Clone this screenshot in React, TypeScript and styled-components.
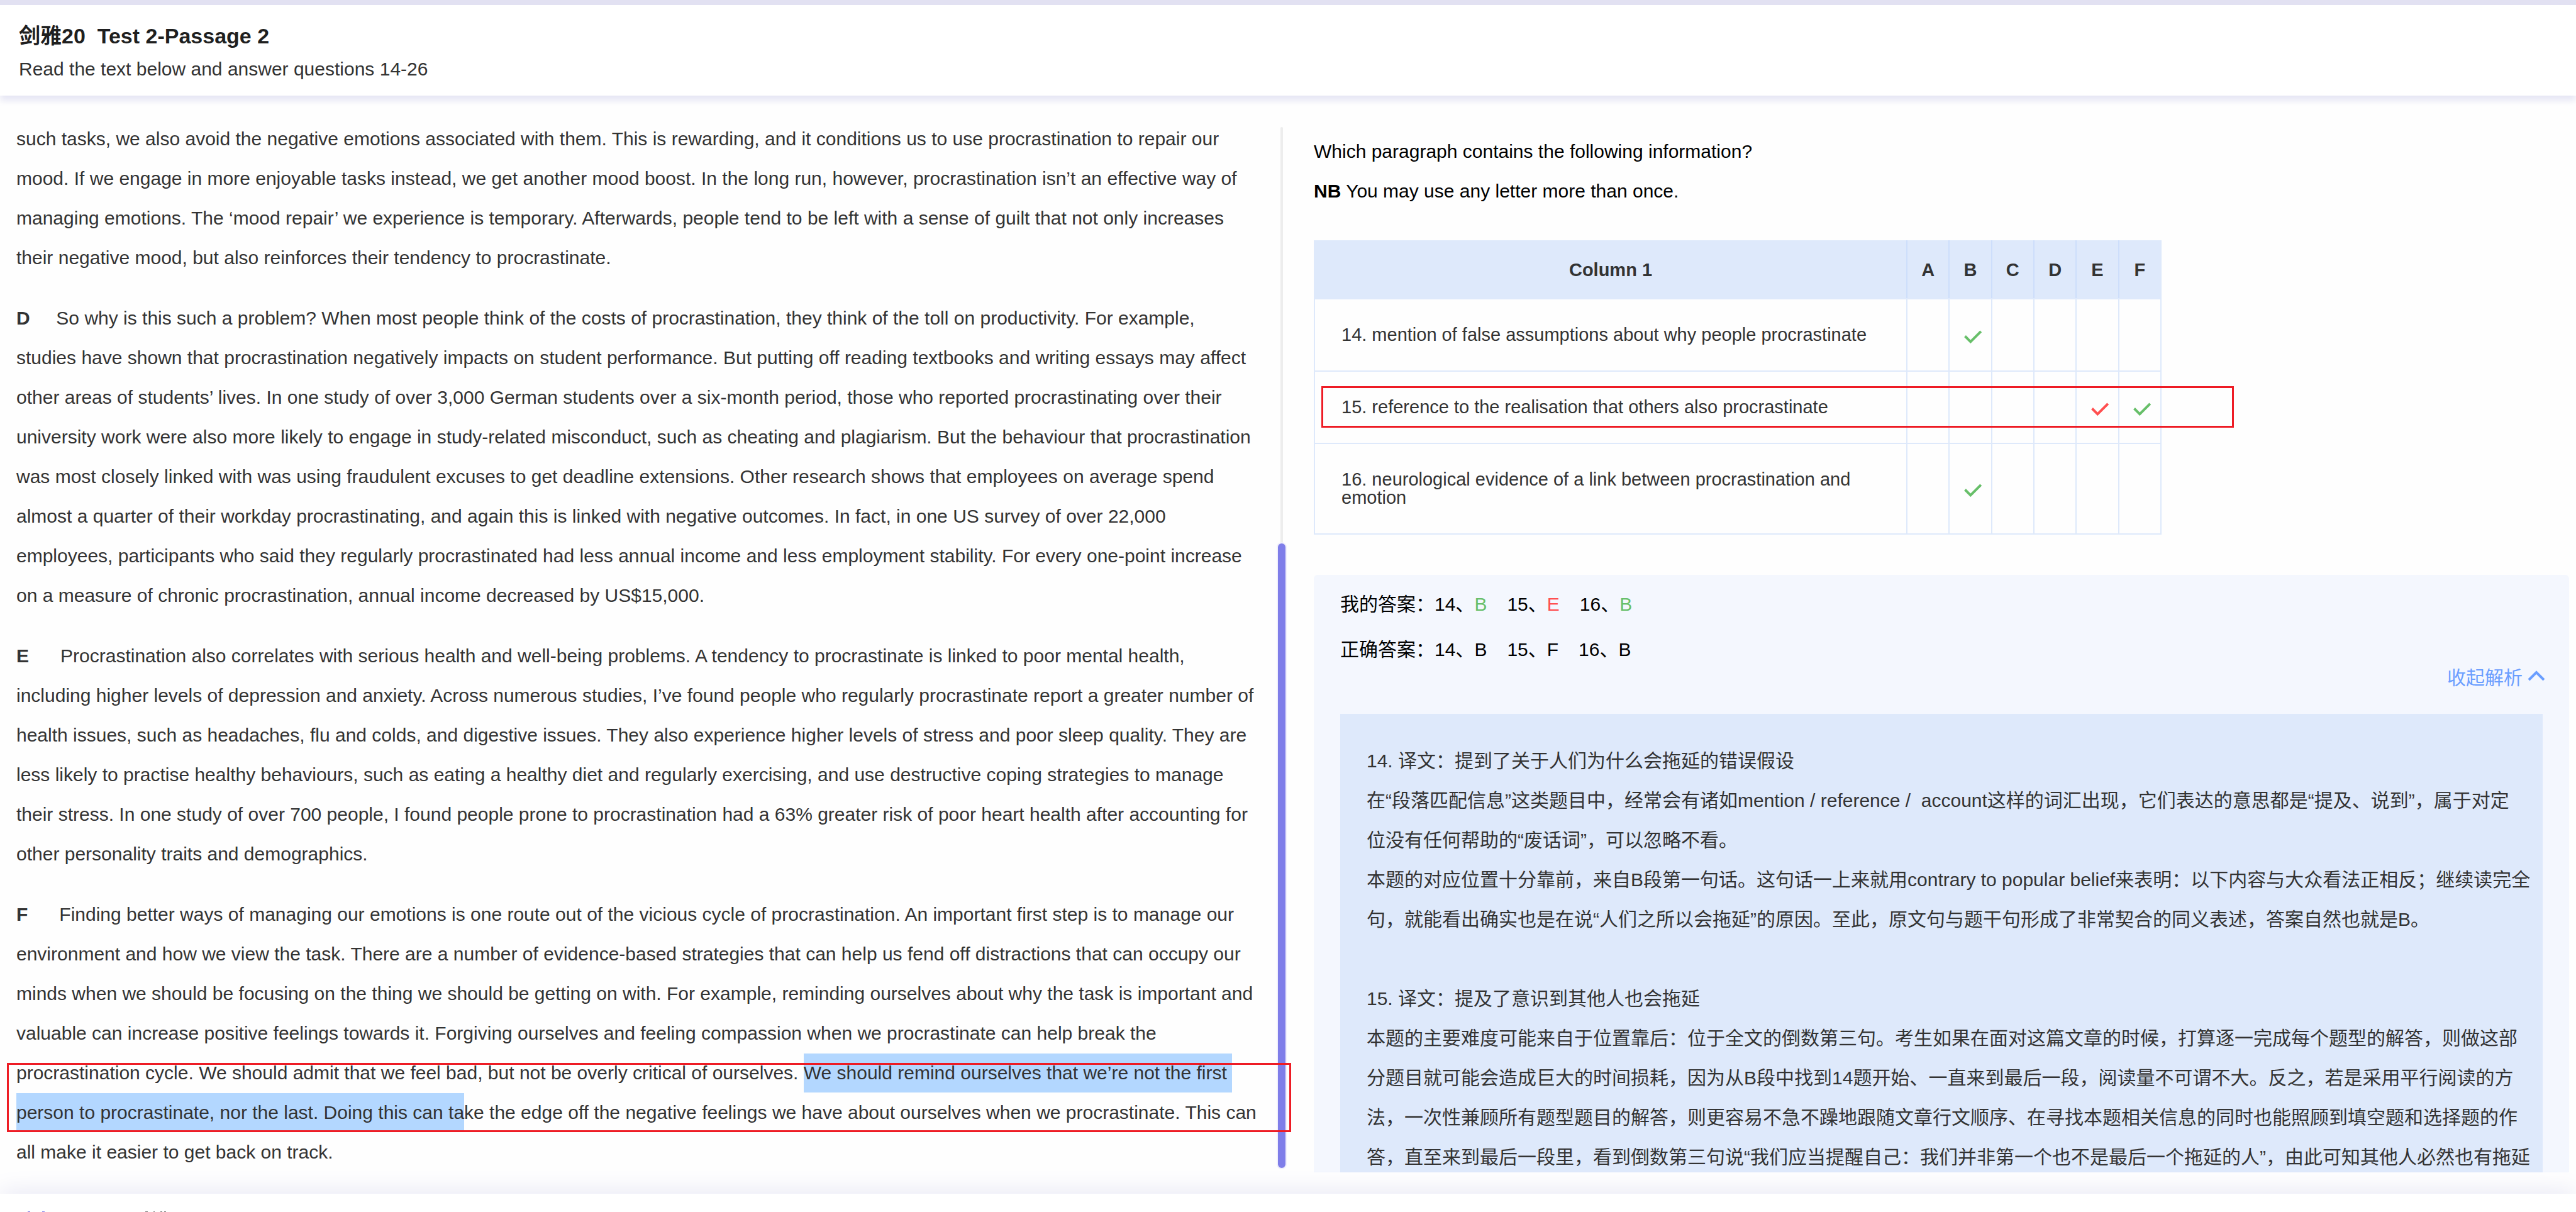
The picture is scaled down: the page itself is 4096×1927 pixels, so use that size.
import React from "react";
import styled, { createGlobalStyle } from "styled-components";

const color = {
  ink: "#333333",
  right: "#67bf69",
  wrong: "#ff4f50",
  mark: "#ee1c25",
  pale: "#dee9fb",
  paleLine: "#cddefb",
  panel: "#f4f7fe",
  link: "#6a9eff",
  accent: "#7f7ee9",
};

const GlobalStyle = createGlobalStyle`
  * { box-sizing: border-box; }
  body {
    margin: 0;
    background: #fefefe;
    color: ${color.ink};
    font-family: "Liberation Sans", "Noto Sans CJK SC", sans-serif;
    font-size: 30px;
  }
  h1, p { margin: 0; }
`;

const Page = styled.div`
  height: 100vh;
  display: flex;
  flex-direction: column;
  overflow: hidden;
`;

const Header = styled.header`
  position: relative;
  z-index: 1;
  display: flex;
  flex-direction: column;
  gap: 13px;
  padding: 29px 30px 22px;
  border-top: 8px solid #e2e1f2;
  background: #ffffff;
  box-shadow: 0 8px 10px #e6e6f4;
`;

const Title = styled.h1`
  font-size: 34px;
  line-height: 40px;
  color: #1f1f1f;
  white-space: pre;
`;

const Subtitle = styled.p`
  line-height: 40px;
`;

const Main = styled.main`
  flex: 1;
  min-height: 0;
  display: grid;
  grid-template-columns: minmax(0, 508fr) 12px minmax(0, 513fr);
  grid-template-rows: minmax(0, 1fr);
  padding-bottom: 34px;
`;

const Passage = styled.article`
  display: flex;
  flex-direction: column;
  gap: 33px;
  padding: 37px 0 0 26px;
  line-height: 63px;
  white-space: pre;
`;

const Paragraph = styled.p`
  position: relative;
`;

const Line = styled.span`
  display: block;
`;

const Selected = styled.mark`
  padding: 14px 0 15px;
  background: #b3d7ff;
  color: inherit;
`;

const RedBox = styled.span<{ $top: number; $left: number; $width: number; $height: number }>`
  position: absolute;
  z-index: 2;
  top: ${(p) => p.$top}px;
  left: ${(p) => p.$left}px;
  width: ${(p) => p.$width}px;
  height: ${(p) => p.$height}px;
  border: 3px solid ${color.mark};
  pointer-events: none;
`;

const Scrollbar = styled.div`
  display: flex;
  flex-direction: column;
  align-items: center;
  margin: 50px 0 7px;
`;

const Track = styled.div`
  flex: 1;
  width: 4px;
  border-radius: 2px 2px 0 0;
  background: #ededed;
`;

const Thumb = styled.div`
  width: 12px;
  height: 60%;
  border-radius: 6px;
  background: ${color.accent};
  box-shadow: 0 0 0 2px #f0effc;
`;

const Questions = styled.section`
  min-height: 0;
  overflow: hidden;
  padding: 57px 11px 0 45px;
`;

const Prompt = styled.p`
  line-height: 63px;
  color: #000000;
`;

const TableArea = styled.div`
  position: relative;
  margin: 47px 0 64px;
`;

const MatchTable = styled.table`
  width: 1348px;
  table-layout: fixed;
  border-collapse: collapse;
  border: 2px solid ${color.pale};
  font-size: 29px;
  line-height: 29px;
`;

const HeadCell = styled.th<{ $wide?: boolean }>`
  width: ${(p) => (p.$wide ? "942px" : "auto")};
  padding: 31px 0 30px;
  background: ${color.pale};
  border: 2px solid ${color.paleLine};
  border-top-color: ${color.pale};
  border-bottom-color: ${color.pale};
  &:first-child { border-left-color: ${color.pale}; }
  &:last-child { border-right-color: ${color.pale}; }
`;

const Statement = styled.th`
  padding: 42px;
  border: 2px solid ${color.pale};
  font-weight: normal;
  text-align: left;
`;

const Choice = styled.td`
  padding: 0;
  border: 2px solid ${color.pale};
  text-align: center;
`;

const CheckSvg = styled.svg<{ $wrong?: boolean }>`
  display: block;
  width: 36px;
  height: 26px;
  margin: 0 auto;
  fill: none;
  stroke: ${(p) => (p.$wrong ? color.wrong : color.right)};
  stroke-width: 4;
`;

const Results = styled.section`
  display: flex;
  flex-direction: column;
  padding: 27px 42px 0;
  border-radius: 6px;
  background: ${color.panel};
`;

const AnswerRows = styled.div`
  display: flex;
  flex-direction: column;
  gap: 32px;
  color: #000000;
`;

const AnswerRow = styled.div`
  display: flex;
  line-height: 40px;
`;

const Answer = styled.span`
  margin-right: 32px;
`;

const Letter = styled.span<{ $tone?: string }>`
  color: ${(p) => p.$tone || "inherit"};
`;

const Toggle = styled.button`
  display: flex;
  align-items: center;
  align-self: flex-end;
  gap: 8px;
  margin: 5px -4px 37px 0;
  padding: 0;
  border: 0;
  background: none;
  color: ${color.link};
  font: inherit;
  line-height: 40px;
  cursor: pointer;
`;

const Chevron = styled.svg`
  width: 28px;
  height: 26px;
  fill: none;
  stroke: currentColor;
  stroke-width: 4;
`;

const Analysis = styled.div`
  padding: 43px 42px;
  background: ${color.pale};
  line-height: 63px;
  white-space: pre;
`;

const Footer = styled.footer`
  position: relative;
  z-index: 1;
  height: 29px;
  padding: 28px 43px 0;
  background: #ffffff;
  box-shadow: 0 0 40px #e2e2f2;
`;

const FooterMarks = styled.svg`
  display: block;
  width: 224px;
  height: 1px;
`;

const paragraphs = [
  {
    letter: "",
    lines: [
      "such tasks, we also avoid the negative emotions associated with them. This is rewarding, and it conditions us to use procrastination to repair our",
      "mood. If we engage in more enjoyable tasks instead, we get another mood boost. In the long run, however, procrastination isn’t an effective way of",
      "managing emotions. The ‘mood repair’ we experience is temporary. Afterwards, people tend to be left with a sense of guilt that not only increases",
      "their negative mood, but also reinforces their tendency to procrastinate.",
    ],
  },
  {
    letter: "D",
    lines: [
      "     So why is this such a problem? When most people think of the costs of procrastination, they think of the toll on productivity. For example,",
      "studies have shown that procrastination negatively impacts on student performance. But putting off reading textbooks and writing essays may affect",
      "other areas of students’ lives. In one study of over 3,000 German students over a six-month period, those who reported procrastinating over their",
      "university work were also more likely to engage in study-related misconduct, such as cheating and plagiarism. But the behaviour that procrastination",
      "was most closely linked with was using fraudulent excuses to get deadline extensions. Other research shows that employees on average spend",
      "almost a quarter of their workday procrastinating, and again this is linked with negative outcomes. In fact, in one US survey of over 22,000",
      "employees, participants who said they regularly procrastinated had less annual income and less employment stability. For every one-point increase",
      "on a measure of chronic procrastination, annual income decreased by US$15,000.",
    ],
  },
  {
    letter: "E",
    lines: [
      "      Procrastination also correlates with serious health and well-being problems. A tendency to procrastinate is linked to poor mental health,",
      "including higher levels of depression and anxiety. Across numerous studies, I’ve found people who regularly procrastinate report a greater number of",
      "health issues, such as headaches, flu and colds, and digestive issues. They also experience higher levels of stress and poor sleep quality. They are",
      "less likely to practise healthy behaviours, such as eating a healthy diet and regularly exercising, and use destructive coping strategies to manage",
      "their stress. In one study of over 700 people, I found people prone to procrastination had a 63% greater risk of poor heart health after accounting for",
      "other personality traits and demographics.",
    ],
  },
];

const finalLines = [
  "      Finding better ways of managing our emotions is one route out of the vicious cycle of procrastination. An important first step is to manage our",
  "environment and how we view the task. There are a number of evidence-based strategies that can help us fend off distractions that can occupy our",
  "minds when we should be focusing on the thing we should be getting on with. For example, reminding ourselves about why the task is important and",
  "valuable can increase positive feelings towards it. Forgiving ourselves and feeling compassion when we procrastinate can help break the",
];

const letters = ["A", "B", "C", "D", "E", "F"];

const statements = [
  { text: "14. mention of false assumptions about why people procrastinate", correct: "B", mine: "B" },
  { text: "15. reference to the realisation that others also procrastinate", correct: "F", mine: "E" },
  { text: "16. neurological evidence of a link between procrastination and emotion", correct: "B", mine: "B" },
];

const analysis = [
  "14. 译文：提到了关于人们为什么会拖延的错误假设",
  "在“段落匹配信息”这类题目中，经常会有诸如mention / reference /  account这样的词汇出现，它们表达的意思都是“提及、说到”，属于对定",
  "位没有任何帮助的“废话词”，可以忽略不看。",
  "本题的对应位置十分靠前，来自B段第一句话。这句话一上来就用contrary to popular belief来表明：以下内容与大众看法正相反；继续读完全",
  "句，就能看出确实也是在说“人们之所以会拖延”的原因。至此，原文句与题干句形成了非常契合的同义表述，答案自然也就是B。",
  "",
  "15. 译文：提及了意识到其他人也会拖延",
  "本题的主要难度可能来自于位置靠后：位于全文的倒数第三句。考生如果在面对这篇文章的时候，打算逐一完成每个题型的解答，则做这部",
  "分题目就可能会造成巨大的时间损耗，因为从B段中找到14题开始、一直来到最后一段，阅读量不可谓不大。反之，若是采用平行阅读的方",
  "法，一次性兼顾所有题型题目的解答，则更容易不急不躁地跟随文章行文顺序、在寻找本题相关信息的同时也能照顾到填空题和选择题的作",
  "答，直至来到最后一段里，看到倒数第三句说“我们应当提醒自己：我们并非第一个也不是最后一个拖延的人”，由此可知其他人必然也有拖延",
].join("\n");

function Lines({ letter, lines }: { letter: string; lines: string[] }) {
  return (
    <>
      {lines.map((line, i) => (
        <Line key={line}>
          {i === 0 && letter && <b>{letter}</b>}
          {line}
        </Line>
      ))}
    </>
  );
}

function Check({ wrong }: { wrong?: boolean }) {
  return (
    <CheckSvg $wrong={wrong} viewBox="0 0 36 26">
      <path d="M9.5 14.5 L18.3 23.3 L34.8 6.8" />
    </CheckSvg>
  );
}

export default function App() {
  return (
    <Page>
      <GlobalStyle />
      <Header>
        <Title>{"剑雅20  Test 2-Passage 2"}</Title>
        <Subtitle>Read the text below and answer questions 14-26</Subtitle>
      </Header>
      <Main>
        <Passage lang="en">
          {paragraphs.map((p) => (
            <Paragraph key={p.letter}>
              <Lines letter={p.letter} lines={p.lines} />
            </Paragraph>
          ))}
          <Paragraph>
            <Lines letter="F" lines={finalLines} />
            <Line>
              procrastination cycle. We should admit that we feel bad, but not be overly critical of ourselves.{" "}
              <Selected>{"We should remind ourselves that we’re not the first "}</Selected>
            </Line>
            <Line>
              <Selected>person to procrastinate, nor the last. Doing this can ta</Selected>
              ke the edge off the negative feelings we have about ourselves when we procrastinate. This can
            </Line>
            <Line>all make it easier to get back on track.</Line>
            <RedBox $top={268} $left={-15} $width={2042} $height={110} />
          </Paragraph>
        </Passage>
        <Scrollbar>
          <Track />
          <Thumb />
        </Scrollbar>
        <Questions>
          <Prompt>Which paragraph contains the following information?</Prompt>
          <Prompt>
            <b>NB</b> You may use any letter more than once.
          </Prompt>
          <TableArea>
            <MatchTable>
              <thead>
                <tr>
                  <HeadCell $wide scope="col">Column 1</HeadCell>
                  {letters.map((l) => (
                    <HeadCell key={l} scope="col">{l}</HeadCell>
                  ))}
                </tr>
              </thead>
              <tbody>
                {statements.map((s) => (
                  <tr key={s.text}>
                    <Statement scope="row">{s.text}</Statement>
                    {letters.map((l) => (
                      <Choice key={l}>
                        {(l === s.correct || l === s.mine) && <Check wrong={l !== s.correct} />}
                      </Choice>
                    ))}
                  </tr>
                ))}
              </tbody>
            </MatchTable>
            <RedBox $top={232} $left={12} $width={1451} $height={66} />
          </TableArea>
          <Results lang="zh-CN">
            <AnswerRows>
              <AnswerRow>
                我的答案：
                <Answer>14、<Letter $tone={color.right}>B</Letter></Answer>
                <Answer>15、<Letter $tone={color.wrong}>E</Letter></Answer>
                <Answer>16、<Letter $tone={color.right}>B</Letter></Answer>
              </AnswerRow>
              <AnswerRow>
                正确答案：
                <Answer>14、<Letter>B</Letter></Answer>
                <Answer>15、<Letter>F</Letter></Answer>
                <Answer>16、<Letter>B</Letter></Answer>
              </AnswerRow>
            </AnswerRows>
            <Toggle type="button">
              收起解析
              <Chevron viewBox="0 0 28 26" aria-hidden="true">
                <path d="M2 16 L14 4 L26 16" />
              </Chevron>
            </Toggle>
            <Analysis>{analysis}</Analysis>
          </Results>
        </Questions>
      </Main>
      <Footer>
        <FooterMarks viewBox="0 0 224 1" aria-hidden="true">
          <path d="M1 0h4v1h-4z M24 0h4v1h-4z" fill={color.accent} />
          <path d="M188 0h4v1h-4z M201 0h2v1h-2z M212 0h3v1h-3z M218 0h3v1h-3z" fill="#777777" />
        </FooterMarks>
      </Footer>
    </Page>
  );
}
